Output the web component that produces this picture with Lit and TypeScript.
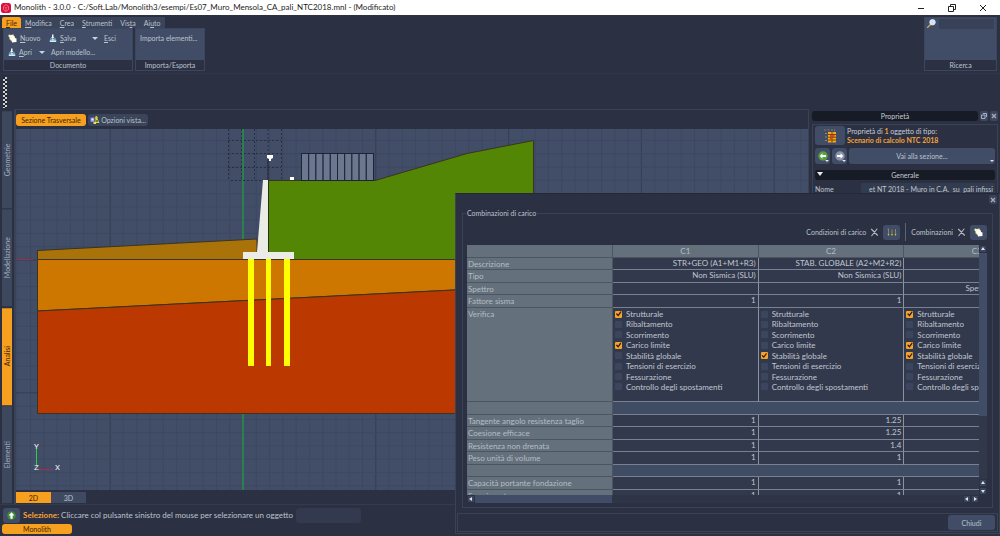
import { LitElement, html, svg, css, nothing } from "lit";
import { customElement, state } from "lit/decorators.js";
import { classMap } from "lit/directives/class-map.js";

const base = css`
  * { box-sizing: border-box; }
  button, input, select {
    font: inherit; color: inherit; margin: 0; padding: 0; border: 0;
    background: none; outline: none; border-radius: 0; min-width: 0;
  }
  button { cursor: pointer; white-space: nowrap; display: flex; align-items: center; justify-content: center; }
  svg { display: block; flex: none; }
  u { text-underline-offset: 1px; text-decoration-thickness: 1px; }
`;

const icons = {
  logo: svg`<svg width="10" height="10" viewBox="0 0 20 20"><rect width="20" height="20" rx="5" fill="#d8123c"/><path d="M10 3l5 4v6l-5 4-5-4V7z" fill="none" stroke="#ff7d98" stroke-width="1.600"/><path d="M7 8l3 2 3-2M10 10v5" stroke="#ff7d98" stroke-width="1.400" fill="none"/></svg>`,
  pages: svg`<svg width="9" height="9" viewBox="0 0 18 18"><path d="M1 2l2-1 2 1 6-1 1 4v6H3V7L1 5z" fill="#fbf3b8"/><path d="M5 5l8-1 1 4 3 1v7l-9 1-1-4H5z" fill="#fffef2"/></svg>`,
  disk: svg`<svg width="8" height="9" viewBox="0 0 16 18"><path d="M6 1h3v5h2l-3.500 4L4 6h2z" fill="#eef3f6"/><path d="M3 8h2l3 4 3-4h2l2 5v3H1v-3z" fill="#5e9dc4"/><path d="M2 13h12v3H2z" fill="#dbe9f0"/><path d="M5 10l3 4 3-4z" fill="#c8e0ee"/></svg>`,
  lens: svg`<svg width="9" height="9" viewBox="0 0 18 18"><path d="M1 17l6-6" stroke="#e0a95a" stroke-width="2.600" stroke-linecap="round"/><circle cx="11" cy="6.500" r="5.500" fill="#cfe4fb" stroke="#f2f6fb" stroke-width="1.500"/></svg>`,
  view: svg`<svg width="10" height="10" viewBox="0 0 20 20"><rect x="1" y="5" width="8" height="9" fill="#8e8ae0"/><rect x="3" y="7" width="4" height="4" fill="#f0f0ff"/><path d="M12 2c3 0 4 2 3 5l4 9H9l2-7c-1-3-1-6 1-7z" fill="#d6d838"/><path d="M11 10h5v4h-5z" fill="#7b7d2a"/><path d="M7 14h5v4H7z" fill="#e9e45c"/></svg>`,
  scenario: svg`<svg width="14" height="14" viewBox="0 0 28 28"><path d="M2 2h4M9 2h4M16 2h4M23 1v3" stroke="#8d7360" stroke-width="2"/><path d="M4 9h4M4 16h4M4 23h4" stroke="#b08040" stroke-width="2"/><rect x="10" y="6" width="16" height="21" fill="#f5a81c"/><path d="M10 11h16M10 16.500h16M10 22h16M18 6v21" stroke="#6a3d08" stroke-width="1.800"/><rect x="14" y="12" width="3" height="4" fill="#e0401a"/><rect x="19" y="12" width="4" height="4" fill="#e0401a"/><rect x="14" y="18" width="3" height="3" fill="#e0401a"/></svg>`,
  back: svg`<svg width="10" height="10" viewBox="0 0 20 20"><circle cx="10" cy="10" r="9.500" fill="#57a03c"/><path d="M9 4.500L3.500 10 9 15.500V12h7V8H9z" fill="#fff"/></svg>`,
  forward: svg`<svg width="10" height="10" viewBox="0 0 20 20"><circle cx="10" cy="10" r="9.500" fill="#8a92a8"/><path d="M11 4.500l5.500 5.500-5.500 5.500V12H4V8h7z" fill="#fff"/></svg>`,
  up: svg`<svg width="9" height="9" viewBox="0 0 20 20"><circle cx="10" cy="10" r="9.500" fill="#3f8b35"/><path d="M3.500 10L10 3l6.500 7H12.500v7h-5v-7z" fill="#fff"/></svg>`,
  cross: svg`<svg width="9" height="9" viewBox="0 0 18 18"><path d="M3 2.500l12 12M14 2L3.500 15.500" stroke="#b4bac5" stroke-width="2.200" stroke-linecap="round"/></svg>`,
  loads: svg`<svg width="10" height="9" viewBox="0 0 20 18"><path d="M1 2h3M3 2v10M10 3v10M17 2v10" stroke="#9d9558" stroke-width="1.600" fill="none"/><path d="M1 12l2 4 2-4zM8 12l2 4 2-4zM15 12l2 4 2-4z" fill="#c8ba4c"/></svg>`,
};

const closeGlyph = svg`<svg width="6" height="6" viewBox="0 0 6 6"><path d="M1 1l4 4M5 1L1 5" stroke="#a7b0c2" stroke-width="1.200"/></svg>`;

@customElement("section-canvas")
class SectionCanvas extends LitElement {
  static styles = css`
    :host { display: block; overflow: hidden; background: #424e68; }
    svg { display: block; width: 100%; height: 100%; font-family: Roboto, sans-serif; font-size: 8px; }
  `;
  render() {
    const step = 13.28;
    const lines = [];
    for (let i = -17; i <= 43; i++) {
      const x = 243 + i * step;
      lines.push(svg`<path d="M${x} 129V900" stroke=${i % 10 ? "#3d4861" : "#343d53"} stroke-width="1"/>`);
    }
    for (let i = -10; i <= 48; i++) {
      const y = 260 + i * step;
      lines.push(svg`<path d="M16 ${y}H2000" stroke=${i % 10 ? "#3d4861" : "#343d53"} stroke-width="1"/>`);
    }
    return html`<svg viewBox="16 129 792 361" preserveAspectRatio="xMinYMin slice" role="img" aria-label="Sezione Trasversale">
      ${lines}
      <path d="M16 259.500H33" stroke="#8d3350" />
      <path d="M243 129V490" stroke="#2b8050" stroke-width="2" />
      <g stroke="#2b3040" stroke-dasharray="2 2" fill="none">
        <path d="M228.500 129V180M241.500 129V180M254.500 129V180M268 129V180M281.500 129V180M228 140.500H281M228 153.500H281M228 167.500H281M231 180.500H262" />
      </g>
      <g stroke="#3a3420" stroke-width="1">
        <path d="M37.500 250.500L257 239V259.500H37.500z" fill="#a97309" />
        <path d="M37.500 259.500H533.500V286L37.500 311z" fill="#cd7700" />
        <path d="M37.500 311L533.500 286V413.500H37.500z" fill="#bb3800" />
        <path d="M268 180.500H375L467 153.500L533.500 140.500V259.500H268z" fill="#548606" />
      </g>
      <g fill="#6b768f" stroke="#1d2436">
        ${Array.from({ length: 10 }, (_, i) => svg`<rect x=${301.5 + i * 7.2} y="153.500" width="7.200" height="27"/>`)}
      </g>
      <path d="M263 180H268V252H294V259H243V252H257z" fill="#ebebe8" />
      <path d="M268.500 180V252" stroke="#26330c" />
      <path d="M268 157V180" stroke="#222838" />
      <path d="M267 155h6v3l-2 1v2h-2v-2l-2-1zM290 177h4v3h-4z" fill="#fff" />
      <path d="M248 259h6v107h-6zM266 259h5v107h-5zM284 259h6v107h-6z" fill="#ffff00" />
      <path d="M36.500 449V466" stroke="#2bd048" />
      <path d="M38 469.500H54" stroke="#b52c40" stroke-dasharray="3 1" />
      <g fill="#f2f4f8"><text x="34" y="449">Y</text><text x="34" y="470">Z</text><text x="55" y="470">X</text></g>
    </svg>`;
  }
}

@customElement("property-panel")
class PropertyPanel extends LitElement {
  static styles = [base, css`
    :host { display: flex; flex-direction: column; gap: 3px; padding: 2px 2px 0 3px; }
    .title { display: flex; gap: 2px; }
    .bar { background: #171b25; color: #c6ccd6; text-align: center; border-radius: 3px; line-height: 10px; height: 10px; margin: 0; font-weight: 400; font-size: 7px; }
    .title .bar { flex: 1; }
    .mini { width: 8px; height: 10px; background: #3c465d; border-radius: 2px; }
    .frame { border: 1px solid #3a4256; border-bottom: 0; padding: 1px 2px; flex: 1; }
    .info { display: flex; gap: 2px; align-items: center; }
    .tile { width: 30px; height: 19px; background: #414d66; border-radius: 3px; }
    .info p { margin: 0; line-height: 9px; color: #c6ccd6; }
    b { color: #f3a33a; }
    .nav { display: flex; gap: 2px; margin-top: 3px; }
    .nav button { background: #414d66; border-radius: 3px; height: 16px; width: 15px; position: relative; }
    .nav button.wide { flex: 1; color: #bcc3ce; }
    .nav button::after { content: ""; position: absolute; right: 1px; bottom: 2px; border: 2px solid transparent; border-top-color: #dfe4ec; border-bottom: 0; }
    .section { margin-top: 6px; position: relative; }
    .section::before { content: ""; position: absolute; left: 2px; top: 2px; border: 3px solid transparent; border-top: 4px solid #e6e9ee; border-bottom: 0; }
    .field { display: flex; align-items: center; justify-content: space-between; margin-top: 3px; color: #c0c6d1; }
    .field input { width: 134px; background: #333b4e; text-align: right; height: 11px; padding-right: 2px; }
  `];
  render() {
    return html`
      <div class="title"><h2 class="bar">Proprietà</h2>
        <button class="mini" aria-label="Sgancia"><svg width="6" height="6" viewBox="0 0 6 6"><path d="M2 .5h3.500V4M.5 2H4v3.500H.5z" fill="none" stroke="#a7b0c2"/></svg></button>
        <button class="mini" aria-label="Chiudi">${closeGlyph}</button></div>
      <div class="frame">
        <div class="info"><button class="tile" aria-label="Scenario">${icons.scenario}</button>
          <p>Proprietà di <b>1</b> oggetto di tipo:<br /><b>Scenario di calcolo NTC 2018</b></p></div>
        <div class="nav"><button aria-label="Indietro">${icons.back}</button><button aria-label="Avanti">${icons.forward}</button><button class="wide">Vai alla sezione...</button></div>
        <h3 class="bar section">Generale</h3>
        <div class="field"><label for="nome">Nome</label><input id="nome" value="et NT 2018 - Muro in C.A.  su  pali infissi" /></div>
      </div>`;
  }
}

const checks = ["Strutturale", "Ribaltamento", "Scorrimento", "Carico limite", "Stabilità globale", "Tensioni di esercizio", "Fessurazione", "Controllo degli spostamenti"];
const active = [[0, 3], [4], [0, 3, 4]];
type Row = { label: string; cells?: string[]; kind?: "checks" | "gap" };
const rows: Row[] = [
  { label: "Descrizione", cells: ["STR+GEO (A1+M1+R3)", "STAB. GLOBALE (A2+M2+R2)", ""] },
  { label: "Tipo", cells: ["Non Sismica (SLU)", "Non Sismica (SLU)", ""] },
  { label: "Spettro", cells: ["", "", "Spettro di progetto SLV"] },
  { label: "Fattore sisma", cells: ["1", "1", ""] },
  { label: "Verifica", kind: "checks" },
  { label: "", kind: "gap" },
  { label: "Tangente angolo resistenza taglio", cells: ["1", "1.25", ""] },
  { label: "Coesione efficace", cells: ["1", "1.25", ""] },
  { label: "Resistenza non drenata", cells: ["1", "1.4", ""] },
  { label: "Peso unità di volume", cells: ["1", "1", ""] },
  { label: "", kind: "gap" },
  { label: "Capacità portante fondazione", cells: ["1", "1", ""] },
  { label: "Scorrimento", cells: ["1", "1", ""] },
];

@customElement("combination-dialog")
class CombinationDialog extends LitElement {
  static styles = [base, css`
    :host { display: flex; flex-direction: column; background: #2b3142; border: 1px solid #3a4256; border-top-color: #232937; padding: 1px 1px 0; color: #bcc3ce; }
    .close { align-self: flex-end; width: 8px; height: 9px; background: #394359; border-radius: 2px; margin-right: 1px; }
    fieldset { flex: 1; min-height: 0; min-width: 0; margin: 4px 5px 5px 5px; padding: 6px 5px 4px 4px; border: 1px solid #3a4256; display: flex; flex-direction: column; gap: 5px; }
    legend { padding: 0 1px; margin-left: -1px; line-height: 10px; }
    .tools { display: flex; justify-content: flex-end; align-items: center; gap: 4px; height: 16px; }
    .tools .sep { width: 1px; height: 18px; background: #596378; margin: 0 1px; }
    .tools .tile { width: 17px; height: 15px; background: #414d66; border-radius: 3px; }
    .area { flex: 1; min-height: 0; display: grid; grid-template: 1fr 8px / 1fr 8px; }
    .view { overflow: hidden; min-width: 0; min-height: 0; background: #313849; }
    table { border-collapse: separate; border-spacing: 0; table-layout: fixed; width: 583px; font-size: 8px; line-height: 11px; }
    col.name { width: 146px; }
    th { font-weight: 400; background: #64717c; color: #b4bcc4; padding: 0; border-right: 1px solid #4b5662; border-bottom: 1px solid #4b5662; }
    thead th { height: 13px; }
    tbody th { text-align: left; vertical-align: top; padding: 1px 0 0 1px; line-height: 10px; }
    td { padding: 0 2px 0 0; text-align: right; vertical-align: top; color: #c0c6d0; background: #32394c; border-right: 1px solid #8a939f; border-bottom: 1px solid #78818f; white-space: nowrap; overflow: hidden; }
    tbody tr { height: 12px; }
    tbody tr:nth-child(even) { height: 13px; }
    tbody tr.checks { height: 94px; }
    tr.gap td { background: #404b64; border-right: 0; }
    .list { height: 84px; padding: 1px 0 0 2px; display: flex; flex-direction: column; justify-content: space-between; }
    label { display: flex; align-items: center; gap: 4px; line-height: 10px; }
    label input { appearance: none; width: 7px; height: 7px; background: #3b465e; border-radius: 1px; flex: none; }
    label input:checked { background: #f5a12a; }
    label input:checked::before { content: ""; display: block; width: 7px; height: 7px; background: #2a1c08; clip-path: polygon(12% 50%, 28% 40%, 44% 58%, 78% 12%, 90% 24%, 46% 84%); }
    .vbar { background: #313849; display: flex; flex-direction: column; }
    .vbar .thumb { height: 163px; background: #414d66; margin-bottom: auto; }
    .hbar { background: #2e3546; display: flex; justify-content: space-between; }
    .hbar .thumb { width: 137px; background: #414d66; margin-right: auto; }
    .arrow { width: 8px; height: 8px; background: #3b465c; border: 1px solid #2b3142; }
    .pair { display: flex; }
    .vbar .pair { flex-direction: column; }
    .foot { display: flex; justify-content: flex-end; border: 1px solid #3a4256; padding: 1px 2px; margin-bottom: 1px; }
    .foot button { width: 47px; height: 15px; background: #414d66; border-radius: 3px; }
  `];
  private arrow(label: string, d: string) {
    return html`<button class="arrow" aria-label=${label}><svg width="6" height="6" viewBox="0 0 6 6"><path d=${d} fill="#dde2ea"/></svg></button>`;
  }
  private row(r: Row) {
    const cells = r.kind === "checks"
      ? active.map((on) => html`<td><div class="list">${checks.map((c, i) => html`<label><input type="checkbox" .checked=${on.includes(i)} />${c}</label>`)}</div></td>`)
      : r.kind === "gap" ? html`<td colspan="3"></td>`
      : r.cells!.map((c) => html`<td>${c}</td>`);
    return html`<tr class=${r.kind ?? ""}><th scope="row">${r.label}</th>${cells}</tr>`;
  }
  render() {
    return html`
      <button class="close" aria-label="Chiudi">${closeGlyph}</button>
      <fieldset>
        <legend>Combinazioni di carico</legend>
        <div class="tools">
          <span>Condizioni di carico</span>${icons.cross}<button class="tile" aria-label="Condizioni">${icons.loads}</button>
          <span class="sep"></span>
          <span>Combinazioni</span>${icons.cross}<button class="tile" aria-label="Nuova combinazione">${icons.pages}</button>
        </div>
        <div class="area">
          <div class="view"><table>
            <colgroup><col class="name" /><col /><col /><col /></colgroup>
            <thead><tr><th></th><th scope="col">C1</th><th scope="col">C2</th><th scope="col">C3</th></tr></thead>
            <tbody>${rows.map((r) => this.row(r))}</tbody>
          </table></div>
          <div class="vbar">${this.arrow("Su", "M1 4l2-3 2 3z")}<div class="thumb"></div>
            <div class="pair">${this.arrow("Su", "M1 4l2-3 2 3z")}${this.arrow("Giù", "M1 2l2 3 2-3z")}</div></div>
          <div class="hbar">${this.arrow("Sinistra", "M4 1L1 3l3 2z")}<div class="thumb"></div>
            <div class="pair">${this.arrow("Sinistra", "M4 1L1 3l3 2z")}${this.arrow("Destra", "M2 1l3 2-3 2z")}</div></div>
          <span></span>
        </div>
      </fieldset>
      <div class="foot"><button>Chiudi</button></div>`;
  }
}

@customElement("app-root")
class AppRoot extends LitElement {
  @state() private tab = "Analisi";

  static styles = [base, css`
    :host { display: flex; flex-direction: column; height: 100vh; background: #2b3142; color: #bcc3ce; font: 7px/10px Lato, "Open Sans", sans-serif; overflow: hidden; position: relative; }
    .titlebar { height: 15px; background: #fff; color: #1c1c1c; display: flex; align-items: center; padding: 0 3px 0 1px; gap: 3px; font-size: 8px; line-height: 15px; }
    .titlebar h1 { font: inherit; margin: 0; flex: 1; white-space: nowrap; }
    .titlebar button { width: 28px; height: 15px; }
    .head { display: flex; justify-content: space-between; padding: 2px 3px 2px 2px; border-bottom: 1px solid #30374a; }
    .menu { display: flex; height: 11px; }
    .menu button { background: #3a445a; padding: 0 4px; }
    .menu button.on, .orange { background: #f79f1e; color: #3c2608; }
    .menu button.on { border-radius: 2px 2px 0 0; }
    .ribbon { display: flex; gap: 2px; padding-left: 1px; }
    .group { display: flex; flex-direction: column; background: #414d66; border: 1px solid #3c465d; }
    .body { flex: 1; display: flex; flex-direction: column; gap: 4px; padding: 4px 4px 3px; }
    .group footer { background: #2b3142; text-align: center; height: 10px; }
    .doc { width: 130px; height: 43px; }
    .imp { width: 70px; height: 43px; }
    .search { width: 73px; }
    .search .body { flex-direction: row; gap: 3px; padding: 1px 2px; }
    .search input { flex: 1; height: 10px; background: #384158; }
    .line { display: flex; align-items: center; }
    .cmd { gap: 3px; justify-content: flex-start; height: 10px; }
    .w31 { width: 31px; }
    .w41 { width: 41px; }
    .w43 { width: 43px; }
    .drop { width: 12px; height: 10px; justify-content: flex-start; }
    .drop::before { content: ""; border: 3px solid transparent; border-top-color: #ccd2dd; border-bottom: 0; }
    .strip { height: 35px; padding: 3px 3px 0; }
    .grip { width: 4px; height: 31px; background: repeating-conic-gradient(#d0d0d0 0 25%, #20242f 0 50%) 0 0 / 4px 4px; }
    .main { flex: 1; min-height: 0; display: flex; }
    .side { width: 12px; padding: 2px 0 1px 2px; display: flex; flex-direction: column; gap: 1px; }
    .side button { flex: 1; writing-mode: vertical-rl; transform: rotate(180deg); background: #3d475e; color: #a6aebc; width: 10px; line-height: 10px; }
    .side button.on { background: #f79f1e; color: #3c2608; }
    .center { flex: 1; min-width: 0; display: flex; flex-direction: column; margin-left: 2px; border: 1px solid #3a4256; border-bottom: 0; border-left-width: 2px; }
    .views { display: flex; gap: 2px; height: 19px; padding: 4px 0 3px 0; }
    .views button { height: 12px; border-radius: 3px; }
    .views .cur { width: 70px; }
    .views .opt { width: 60px; background: #3a445a; gap: 1px; }
    section-canvas { flex: 1; min-height: 0; }
    .modes { display: flex; height: 14px; padding: 2px 0 1px; }
    .modes button { width: 35px; background: #3f4a62; }
    .modes .orange { background: #f79f1e; }
    property-panel { width: 191px; }
    .status { display: flex; align-items: center; gap: 3px; padding: 2px 3px 1px; height: 20px; border-top: 1px solid #343b4d; }
    .status .go { width: 17px; height: 15px; background: #414d66; border-radius: 3px; }
    .status b { color: #f3a33a; }
    .status label { font-size: 8px; white-space: nowrap; }
    .status input { width: 65px; height: 15px; background: #333a50; border-radius: 3px; }
    .task { padding: 0 2px 2px; }
    .task button { width: 70px; height: 10px; border-radius: 3px; }
    combination-dialog { position: absolute; right: 0; bottom: 2px; width: 545px; height: 341px; }
  `];

  render() {
    const menu = ["File|F|ile", "|M|odifica", "|C|rea", "|S|trumenti", "Vis|t|a", "Ai|u|to"];
    return html`
      <div class="titlebar">${icons.logo}<h1>Monolith - 3.0.0 - C:/Soft.Lab/Monolith3/esempi/Es07_Muro_Mensola_CA_pali_NTC2018.mnl - (Modificato)</h1>
        <button aria-label="Riduci"><svg width="8" height="8" viewBox="0 0 8 8"><path d="M1 4.500h6" stroke="#222"/></svg></button>
        <button aria-label="Ripristina"><svg width="8" height="8" viewBox="0 0 8 8"><path d="M.5 2.500h5v5h-5zM2.500 2V.5h5v5H6" fill="none" stroke="#222"/></svg></button>
        <button aria-label="Chiudi"><svg width="8" height="8" viewBox="0 0 8 8"><path d="M1 1l6 6M7 1L1 7" stroke="#222"/></svg></button>
      </div>
      <div class="head">
        <div>
          <nav class="menu">${menu.map((m, i) => {
            const [a, k, z] = m.split("|");
            return html`<button class=${classMap({ on: i === 0 })}><span>${i === 0 ? nothing : a}<u>${k}</u>${z}</span></button>`;
          })}</nav>
          <div class="ribbon">
            <section class="group doc"><div class="body">
              <div class="line"><button class="cmd w41">${icons.pages}<span><u>N</u>uovo</span></button><button class="cmd w43">${icons.disk}<span><u>S</u>alva</span></button><button class="drop" aria-label="Salva con nome"></button><button class="cmd"><span><u>E</u>sci</span></button></div>
              <div class="line"><button class="cmd w31">${icons.disk}<span><u>A</u>pri</span></button><button class="drop" aria-label="File recenti"></button><button class="cmd">Apri modello...</button></div>
            </div><footer>Documento</footer></section>
            <section class="group imp"><div class="body"><div class="line"><button class="cmd">Importa elementi...</button></div></div><footer>Importa/Esporta</footer></section>
          </div>
        </div>
        <section class="group search"><div class="body">${icons.lens}<input aria-label="Ricerca" /></div><footer>Ricerca</footer></section>
      </div>
      <div class="strip"><div class="grip"></div></div>
      <div class="main">
        <nav class="side">${["Geometrie", "Modellazione", "Analisi", "Elementi"].map((t) => html`<button class=${classMap({ on: t === this.tab })} @click=${() => (this.tab = t)}>${t}</button>`)}</nav>
        <div class="center">
          <div class="views"><button class="cur orange">Sezione Trasversale</button><button class="opt">${icons.view}Opzioni vista...</button></div>
          <section-canvas></section-canvas>
          <div class="modes"><button class="orange">2D</button><button>3D</button></div>
        </div>
        <property-panel></property-panel>
      </div>
      <div class="status"><button class="go" aria-label="Su">${icons.up}</button><label for="cmd"><b>Selezione:</b> Cliccare col pulsante sinistro del mouse per selezionare un oggetto</label><input id="cmd" /></div>
      <div class="task"><button class="orange">Monolith</button></div>
      <combination-dialog></combination-dialog>`;
  }
}
